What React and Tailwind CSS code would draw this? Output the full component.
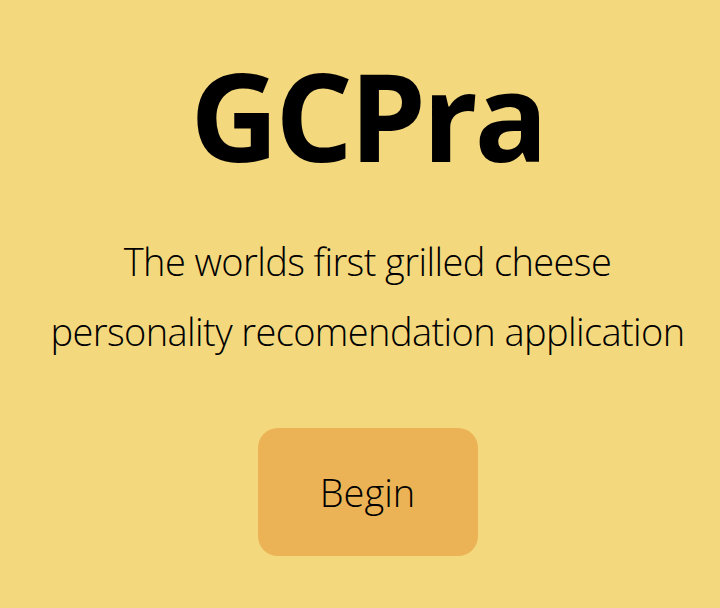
export default function App() {
  return (
    <div className="min-h-[608px] w-full bg-[#f4d87e] pl-[15px] flex flex-col items-center text-black" style={{ fontFamily: '"Open Sans", "Noto Sans", sans-serif' }}>
      <h1 className="mt-[40px] text-[122px] leading-[150px] font-bold tracking-[-3.5px]">GCPra</h1>
      <p className="mt-[36px] text-[38px] leading-[70px] font-light text-center tracking-[-0.6px]">
        The worlds first grilled cheese
        <br />
        personality recomendation application
      </p>
      <button className="mt-[62px] w-[220px] h-[128px] rounded-[20px] bg-[#ebb355] text-[38px] font-light">
        Begin
      </button>
    </div>
  );
}
